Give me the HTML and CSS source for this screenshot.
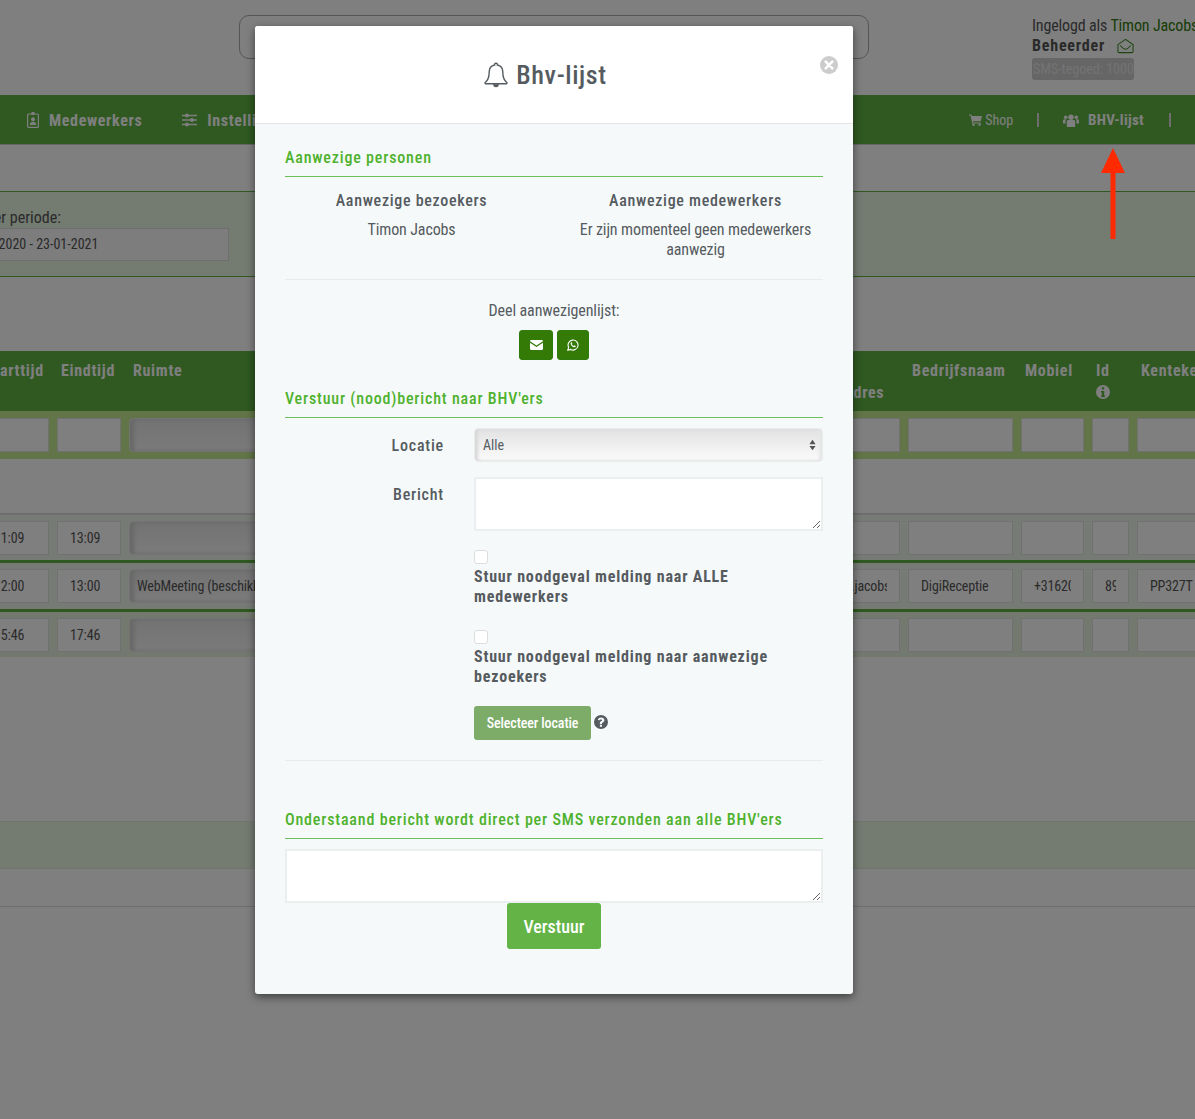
FILE: index.html
```html
<!DOCTYPE html>
<html lang="nl">
<head>
<meta charset="utf-8">
<title>Bhv-lijst</title>
<link rel="stylesheet" href="styles.css">
</head>
<body>
<div class="page">
  <header class="top">
    <div class="search"></div>
    <div class="user">
      <div class="user-line">Ingelogd als <span class="user-name">Timon Jacobs</span></div>
      <div class="user-role">Beheerder
        <svg class="env" viewBox="0 0 18 16" width="17" height="16" fill="none" stroke="currentColor" stroke-width="1.1"><path d="M1 6.500 9 1l8 5.500V14a1 1 0 0 1-1 1H2a1 1 0 0 1-1-1z"/><path d="M3.500 7.500C6 10.500 7.500 11.500 9 11.500s3-1 5.500-4"/></svg>
      </div>
      <div class="credit">SMS-tegoed: 1000</div>
    </div>
  </header>
  <nav class="nav">
    <span class="nav-item nav-staff">
      <svg viewBox="0 0 12 16" width="12" height="16"><path fill="none" stroke="currentColor" stroke-width="1.200" d="M1.600 2h8.800a1 1 0 0 1 1 1v11.400a1 1 0 0 1-1 1H1.600a1 1 0 0 1-1-1V3a1 1 0 0 1 1-1z"/><path fill="currentColor" d="M4.500 0h3v3h-3z"/><circle cx="6" cy="7.300" r="2" fill="currentColor"/><path fill="currentColor" d="M2.800 13c0-2.200 1.400-3.300 3.200-3.300s3.200 1.100 3.200 3.300z"/></svg>
      Medewerkers</span>
    <span class="nav-item nav-settings">
      <svg viewBox="0 0 15 14" width="15" height="14" fill="none" stroke="currentColor" stroke-width="1.300"><path d="M0 2.500h15M0 7h15M0 11.500h15"/><circle cx="5" cy="2.500" r="1.300" fill="currentColor"/><circle cx="10" cy="7" r="1.300" fill="currentColor"/><circle cx="5" cy="11.500" r="1.300" fill="currentColor"/></svg>
      Instellingen</span>
    <span class="nav-shop">
      <svg viewBox="0 0 13 12" width="13" height="12"><path fill="currentColor" d="M0 .5h2.300l.4 1.500H13l-1.300 5.200H3.900l.3 1.200h7.800v1H3.300L1.500 1.500H0z"/><circle cx="4.500" cy="10.700" r="1.200" fill="currentColor"/><circle cx="10.500" cy="10.700" r="1.200" fill="currentColor"/></svg>
      Shop</span>
    <span class="nav-sep nav-sep-a"></span>
    <span class="nav-item nav-bhv">
      <svg viewBox="0 0 16 13" width="16" height="13" fill="currentColor"><circle cx="8" cy="3.200" r="2.700"/><circle cx="2.700" cy="3.300" r="1.800"/><circle cx="13.300" cy="3.300" r="1.800"/><path d="M3.800 7.500c0-1 .8-1.500 1.500-1.500h5.400c.7 0 1.500.5 1.500 1.500V13H3.800z"/><path d="M0 6.800c0-1 .6-1.500 1.300-1.500h1.700c-.4.600-.5 1.300-.5 2.200V9.500H0z"/><path d="M16 6.800c0-1-.6-1.500-1.300-1.500H13c.4.600.5 1.300.5 2.200V9.500H16z"/></svg>
      BHV-lijst</span>
    <span class="nav-sep nav-sep-b"></span>
  </nav>
  <section class="filter">
    <label class="filter-label">Filter periode:</label>
    <div class="filter-input">23-01-2020 - 23-01-2021</div>
  </section>
  <section class="table">
    <div class="t-head">
      <div class="th">Starttijd</div>
      <div class="th">Eindtijd</div>
      <div class="th">Ruimte</div>
      <div class="th th-low">E-mailadres</div>
      <div class="th">Bedrijfsnaam</div>
      <div class="th">Mobiel</div>
      <div class="th th-id">Id
        <svg viewBox="0 0 14 14" width="14" height="14"><path fill="currentColor" fill-rule="evenodd" d="M7 0a7 7 0 1 1 0 14A7 7 0 0 1 7 0zM5.800 2.300v2.200h2.400V2.300zM5 6v1.500h.9v3H5V12h4v-1.500h-.8V6z"/></svg>
      </div>
      <div class="th">Kenteken</div>
    </div>
    <div class="t-filter">
      <div class="cell"></div><div class="cell"></div><div class="cell cell-select"></div><div class="cell"></div><div class="cell"></div><div class="cell"></div><div class="cell"></div><div class="cell"></div>
    </div>
    <div class="t-row t-row-first">
      <div class="cell"><span class="val">11:09</span></div><div class="cell"><span class="val">13:09</span></div><div class="cell cell-select"></div><div class="cell"></div><div class="cell"></div><div class="cell"></div><div class="cell"></div><div class="cell"></div>
    </div>
    <div class="t-row">
      <div class="cell"><span class="val">12:00</span></div><div class="cell"><span class="val">13:00</span></div><div class="cell cell-select"><span class="val">WebMeeting (beschikbaar voor iedereen)</span></div><div class="cell"><span class="val">timon.jacobs@digireceptie.nl</span></div><div class="cell"><span class="val">DigiReceptie</span></div><div class="cell"><span class="val">+31620000000</span></div><div class="cell"><span class="val">8912</span></div><div class="cell"><span class="val">PP327T</span></div>
    </div>
    <div class="t-row t-row-last">
      <div class="cell"><span class="val">15:46</span></div><div class="cell"><span class="val">17:46</span></div><div class="cell cell-select"></div><div class="cell"></div><div class="cell"></div><div class="cell"></div><div class="cell"></div><div class="cell"></div>
    </div>
  </section>
  <div class="band"></div>
  <div class="foot-line"></div>
</div>

<div class="overlay"></div>

<div class="arrow">
  <svg viewBox="0 0 26 92" width="26" height="92"><path fill="#ff2a00" d="M13 0 25 25H15.500V91h-5V25H1z"/></svg>
</div>

<div class="modal">
  <div class="modal-head">
    <h1 class="modal-title">
      <svg viewBox="0 0 24 26" width="24" height="26" fill="none" stroke="currentColor" stroke-width="1.400"><path d="M12 1.200a1.400 1.400 0 0 1 1.400 1.800c3.800.7 5.400 3.700 5.400 7.200 0 5.500 1.200 8 4 10.300.4.500.2 1.300-.6 1.300H1.800c-.8 0-1-.8-.6-1.300 2.800-2.300 4-4.800 4-10.300 0-3.500 1.600-6.500 5.400-7.200A1.400 1.400 0 0 1 12 1.200z"/><path d="M9.800 22.200c0 1.400 1 2.300 2.200 2.300s2.200-.9 2.200-2.300" fill="currentColor"/></svg>
      Bhv-lijst
    </h1>
    <button class="close" aria-label="Sluiten">
      <svg viewBox="0 0 10 10" width="10" height="10"><path stroke="#fff" stroke-width="2.600" stroke-linecap="round" d="M1.700 1.700l6.600 6.600M8.300 1.700 1.700 8.300"/></svg>
    </button>
  </div>
  <div class="modal-body">
    <h2 class="sec-title">Aanwezige personen</h2>
    <div class="present">
      <div class="present-col">
        <h3 class="present-title">Aanwezige bezoekers</h3>
        <p class="present-text">Timon Jacobs</p>
      </div>
      <div class="present-col">
        <h3 class="present-title">Aanwezige medewerkers</h3>
        <p class="present-text">Er zijn momenteel geen medewerkers aanwezig</p>
      </div>
    </div>
    <hr class="rule rule-share">
    <div class="share">
      <div class="share-label">Deel aanwezigenlijst:</div>
      <div class="share-btns">
        <button class="share-btn share-mail">
          <svg viewBox="0 0 13 10" width="13" height="10"><path fill="#fff" d="M0 1.300C0 .6.500 0 1.200 0h10.600C12.500 0 13 .6 13 1.300L6.500 5.600zM0 2.800l6.500 4.300L13 2.800v6c0 .7-.5 1.200-1.200 1.200H1.200C.5 10 0 9.500 0 8.800z"/></svg>
        </button>
        <button class="share-btn share-wa">
          <svg viewBox="0 0 12 12" width="12" height="12" fill="none" stroke="#fff" stroke-width="1.100"><path d="M.8 11.200l.8-2.900A5 5 0 1 1 3.600 10.400z"/><path fill="#fff" stroke="none" d="M4.300 3.200c-.5.300-.8.900-.6 1.700.5 1.600 1.900 3 3.500 3.400.8.100 1.300-.2 1.600-.8.100-.3 0-.5-.2-.6l-1-.5c-.2-.1-.4 0-.5.100l-.4.500c-.8-.3-1.500-1-1.900-1.800l.4-.5c.1-.100.1-.3 0-.5l-.4-.9c-.1-.2-.3-.2-.5-.100z"/></svg>
        </button>
      </div>
    </div>
    <h2 class="sec-title sec-notify">Verstuur (nood)bericht naar BHV'ers</h2>
    <div class="form-row form-row-loc">
      <label class="form-label">Locatie</label>
      <div class="form-control select">
        <span>Alle</span>
        <svg viewBox="0 0 8 14" width="7" height="14"><path fill="#555" d="M4 1 7.500 6h-7zM4 13 .5 8h7z"/></svg>
      </div>
    </div>
    <div class="form-row form-row-msg">
      <label class="form-label">Bericht</label>
      <div class="form-stack">
        <textarea class="form-control area"></textarea>
        <label class="check check-first"><span class="check-box"></span><span class="check-text">Stuur noodgeval melding naar ALLE medewerkers</span></label>
        <label class="check"><span class="check-box"></span><span class="check-text">Stuur noodgeval melding naar aanwezige bezoekers</span></label>
        <div class="loc-row">
          <button class="loc-btn">Selecteer locatie</button>
          <svg class="help" viewBox="0 0 14 14" width="14" height="14"><path fill="#555b5f" fill-rule="evenodd" d="M7 0a7 7 0 1 1 0 14A7 7 0 0 1 7 0zM5.900 9.700v2h2.100v-2zM7.200 2.500C5.500 2.500 4.400 3.300 3.800 4.500l1.300 1c.4-.6.900-1 1.800-1 .7 0 1.200.3 1.200.8 0 .5-.4.700-1 1-.8.400-1.500.9-1.200 2.700H8c-.1-.8.200-1.100.9-1.500.8-.5 1.500-1 1.500-2.200 0-1.800-1.500-2.800-3.200-2.800z"/></svg>
        </div>
      </div>
    </div>
    <hr class="rule rule-sms">
    <h2 class="sec-title sec-sms">Onderstaand bericht wordt direct per SMS verzonden aan alle BHV'ers</h2>
    <textarea class="form-control area area-wide"></textarea>
    <div class="send-row"><button class="send">Verstuur</button></div>
  </div>
</div>
</body>
</html>
```
FILE: styles.css
```css
* { box-sizing: border-box; }
html, body { margin: 0; height: 100%; }
body {
  font-family: "Roboto", "Liberation Sans", sans-serif;
  font-stretch: 75%;
  color: #555b5f;
  background: #fff;
  overflow: hidden;
  width: 1195px;
  height: 1119px;
  position: relative;
}
.page { width: 1195px; height: 1119px; overflow: hidden; }

.top { display: flex; height: 95px; }
.search { flex: none; width: 630px; height: 44px; margin: 15px 0 0 239px; border: 1px solid #aaa; border-radius: 10px; }
.user { flex: none; margin-left: 163px; padding-top: 16px; white-space: nowrap; font-size: 16px; color: #555; }
.user-line { line-height: 20px; letter-spacing: -.15px; }
.user-name { color: #2f7a0c; }
.user-role { line-height: 20px; font-weight: 700; letter-spacing: .8px; display: flex; align-items: center; gap: 12px; }
.env { color: #3d8a23; }
.credit { margin-top: 2px; width: 102px; height: 22px; line-height: 22px; font-size: 14px; background: #ccc; border-radius: 3px; color: #e6e6e6; padding-left: 1px; }

.nav { display: flex; align-items: center; height: 50px; padding-top: 1px; background: #5eb242; border-bottom: 1px solid #ccc; color: #fff; font-size: 16px; font-weight: 700; letter-spacing: .65px; white-space: nowrap; }
.nav-item, .nav-shop { display: flex; align-items: center; }
.nav-staff { margin-left: 27px; gap: 10px; }
.nav-settings { margin-left: 40px; gap: 10px; }
.nav-shop { margin-left: auto; gap: 3px; font-size: 14px; font-weight: 400; letter-spacing: 0; }
.nav-sep { width: 2px; height: 14px; background: #ddd; }
.nav-sep-a { margin-left: 24px; }
.nav-bhv { margin-left: 24px; gap: 9px; font-size: 15px; letter-spacing: .3px; }
.nav-sep-b { margin: 0 24px 0 25px; }

.filter { margin-top: 46px; height: 86px; border-top: 1px solid #5eb242; border-bottom: 1px solid #5eb242; background: #e8f6e2; padding-top: 16px; font-size: 16px; color: #555; }
.filter-label { display: block; margin-left: -26px; line-height: 20px; }
.filter-input { margin-left: -70px; width: 299px; height: 33px; line-height: 31px; padding-left: 33px; border: 1px solid #ddd; background: #fafafa; font-size: 14px; }

.table { margin-top: 74px; margin-left: -19px; width: 1300px; font-size: 14px; color: #555; }
.t-head, .t-filter, .t-row { display: grid; grid-template-columns: 68px 64px 670px 93px 105px 63px 37px 100px; column-gap: 8px; }
.t-head { height: 60px; background: #5eb242; color: #fff; font-size: 16px; font-weight: 700; letter-spacing: .7px; }
.th { padding: 9px 0 0 4px; line-height: 22px; white-space: nowrap; }
.th-low { margin-left: -7px; padding: 31px 16px 0 0; text-align: right; }
.th-id { display: flex; flex-direction: column; align-items: flex-start; gap: 3px; }
.t-filter { height: 48px; padding-top: 7px; background: #c2ea90; margin-bottom: 54px; }
.cell { height: 34px; line-height: 32px; padding: 0 12px; border: 1px solid #e2e2e2; background: #fff; white-space: nowrap; letter-spacing: -.15px; }
.val { display: block; overflow: hidden; }
.cell-select { padding: 0 7px; border-radius: 4px 0 0 4px; border-color: #e6e6e6; background: linear-gradient(#e6e6e6, #f6f6f6); box-shadow: inset 4px 0 4px #cfcfcf; }
.t-row { height: 49px; padding-top: 6px; background: #eff6ea; border-bottom: 3px solid #5eb242; }
.t-row-first { height: 50px; border-top: 2px solid #ddd; }
.t-row-last { height: 45px; border-bottom: 0; background: #e8f2e0; }
.band { margin-top: 164px; height: 48px; background: #e8f6e2; border-top: 1px solid #e0eada; border-bottom: 1px solid #e0eada; }
.foot-line { margin-top: 37px; height: 1px; background: #ddd; }

.overlay { position: absolute; inset: 0; background: rgba(0,0,0,.5); }
.arrow { position: absolute; left: 1100px; top: 148px; line-height: 0; }

.modal { position: absolute; left: 255px; top: 26px; width: 598px; height: 968px; border-radius: 3px; background: #f6f9fa; box-shadow: 0 3px 9px rgba(0,0,0,.5); }
.modal-head { position: relative; height: 98px; background: #fff; border-bottom: 1px solid #e5e5e5; border-radius: 3px 3px 0 0; }
.modal-title { margin: 0; display: flex; justify-content: center; align-items: flex-start; gap: 8px; padding: 31px 17px 0 0; height: 97px; font-size: 26px; line-height: 36px; font-weight: 500; letter-spacing: .6px; color: #555b5f; }
.modal-title svg { margin-top: 5px; }
.close { position: absolute; right: 15px; top: 30px; width: 18px; height: 18px; padding: 0; border: 0; border-radius: 50%; background: #ccc; display: flex; align-items: center; justify-content: center; }
.modal-body { padding: 23px 30px 0; }
.sec-title { margin: 0; padding: 1px 0 8px; border-bottom: 1px solid #6cc05a; font-size: 16px; line-height: 20px; font-weight: 500; letter-spacing: .82px; color: #4fb22e; }
.present { display: flex; justify-content: space-between; margin-top: 14px; }
.present-col { width: 253px; text-align: center; font-size: 16px; }
.present-col + .present-col { margin-right: 1px; }
.present-title { margin: 0; line-height: 20px; font-size: 16px; font-weight: 500; letter-spacing: .7px; color: #555b5f; }
.present-text { margin: 9px 0 0; line-height: 20px; letter-spacing: -.12px; }
.rule { border: 0; border-top: 1px solid #e8ecec; margin: 0; }
.rule-share { margin-top: 19px; }
.share { margin-top: 21px; text-align: center; font-size: 16px; line-height: 20px; letter-spacing: -.1px; }
.share-btns { display: flex; justify-content: center; gap: 4px; margin-top: 9px; }
.share-btn { height: 30px; padding: 0; border: 1px solid #2f7a0c; border-radius: 3px; background: #347a07; display: flex; align-items: center; justify-content: center; }
.share-mail { width: 34px; }
.share-wa { width: 32px; }
.sec-notify { margin-top: 28px; }
.form-row { display: flex; }
.form-row-loc { margin-top: 10px; }
.form-row-msg { margin-top: 15px; }
.form-label { flex: none; width: 159px; height: 34px; margin-right: 30px; text-align: right; font-size: 16px; font-weight: 500; letter-spacing: .8px; line-height: 36px; }
.form-control { display: block; border: 2px solid #ecefef; background: #fff; font-family: inherit; }
.select { flex: 1; height: 34px; display: flex; align-items: center; justify-content: space-between; padding: 0 6px 0 8px; border-width: 1px; border-color: #e8ecec; font-size: 14px; border-radius: 4px; background: linear-gradient(#e2e2e2, #fbfbfb); box-shadow: inset 3px 0 3px #d8d8d8, inset -3px 0 3px #e6e6e6; }
.form-stack { flex: 1; min-width: 0; }
.area { width: 100%; height: 54px; margin: 0; padding: 6px; resize: vertical; }
.check { display: block; }
.check-first { margin-top: 19px; }
.check + .check { margin-top: 23px; }
.check-box { display: block; width: 14px; height: 14px; border: 1px solid #ddd; border-radius: 3px; background: #fff; }
.check-text { display: block; margin-top: 3px; font-size: 16px; line-height: 20px; font-weight: 700; letter-spacing: .82px; }
.loc-row { display: flex; align-items: flex-start; margin-top: 19px; }
.loc-btn { width: 117px; height: 34px; border: 0; border-radius: 3px; background: #7dab68; color: #fff; font: inherit; font-size: 14px; font-weight: 500; letter-spacing: -.1px; }
.help { margin: 9px 0 0 3px; }
.rule-sms { margin-top: 20px; }
.sec-sms { margin-top: 48px; }
.area-wide { margin-top: 10px; }
.send-row { display: flex; justify-content: center; }
.send { width: 94px; height: 46px; border: 0; border-radius: 3px; background: #63b346; color: #fff; font: inherit; font-size: 18px; font-weight: 500; }
```
